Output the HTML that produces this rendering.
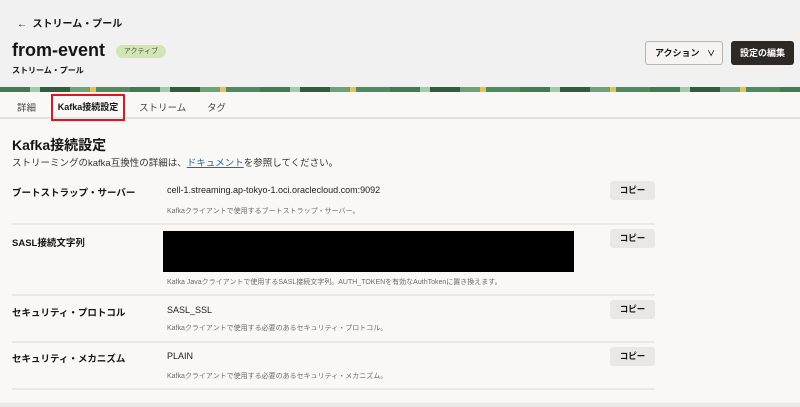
<!DOCTYPE html>
<html><head><meta charset="utf-8"><style>
*{margin:0;padding:0;box-sizing:border-box}
body{width:800px;height:407px;overflow:hidden;background:#faf8f7;font-family:"Liberation Sans","Noto Sans CJK JP",sans-serif;color:#161513;position:relative}
.a{position:absolute;white-space:nowrap}
.hdr{position:absolute;left:0;top:0;width:800px;height:88px;background:#f1f1f1}
.band{position:absolute;left:0;top:87px;width:800px;height:5px;background:repeating-linear-gradient(90deg,#3f7c50 0 30px,#9fcfa7 30px 40px,#2f5e3a 40px 70px,#6aa574 70px 90px,#e8c24a 90px 96px,#4e8c5d 96px 130px)}
.tabs{position:absolute;left:0;top:92px;width:800px;height:27px;border-bottom:2px solid #e4e1de}
.lbl{font-size:9.5px;font-weight:bold}
.val{font-size:9px;color:#222}
.help{font-size:7px;color:#6f6b67}
.copy{position:absolute;left:610px;width:45px;height:19px;background:#e9e8e6;border-radius:3px;font-size:8.5px;font-weight:bold;text-align:center;line-height:19px}
.div{position:absolute;left:12px;width:643px;height:2px;background:#ebe8e5}
</style></head><body>
<div class="hdr"></div>
<div class="band"></div>
<div class="a" style="left:17px;top:15px;font-size:10px;font-weight:bold">←&nbsp; ストリーム・プール</div>
<div class="a" style="left:12px;top:40px;font-size:18px;font-weight:bold">from-event</div>
<div class="a" style="left:116px;top:45px;width:50px;height:13px;border-radius:7px;background:#d3e5b4;font-size:7px;color:#4a5a34;text-align:center;line-height:13px">アクティブ</div>
<div class="a" style="left:12px;top:65px;font-size:8px;font-weight:bold">ストリーム・プール</div>
<div class="a" style="left:645px;top:41px;width:78px;height:24px;border:1px solid #b9b6b2;border-radius:3px;background:#f5f4f2;font-size:9px;font-weight:bold;line-height:22px;padding-left:9px">アクション&nbsp;&nbsp; <span style="font-size:8px">∨</span></div>
<div class="a" style="left:731px;top:41px;width:63px;height:24px;border-radius:3px;background:#2f2926;color:#fff;font-size:9px;font-weight:bold;line-height:24px;text-align:center">設定の編集</div>
<div class="tabs"></div>
<div class="a" style="left:17px;top:100px;font-size:9.5px;color:#444">詳細</div>
<div class="a" style="left:51px;top:94px;width:74px;height:27px;border:2.5px solid #e0161e;font-size:9px;font-weight:bold;text-align:center;line-height:22px">Kafka接続設定</div>
<div class="a" style="left:139px;top:100px;font-size:9.5px;color:#444">ストリーム</div>
<div class="a" style="left:207px;top:100px;font-size:9.5px;color:#444">タグ</div>
<div class="a" style="left:12px;top:135px;font-size:14px;font-weight:bold">Kafka接続設定</div>
<div class="a" style="left:12px;top:155px;font-size:9.5px;color:#333">ストリーミングのkafka互換性の詳細は、<span style="color:#1a6e9a;text-decoration:underline">ドキュメント</span>を参照してください。</div>

<div class="a lbl" style="left:12px;top:185px">ブートストラップ・サーバー</div>
<div class="a val" style="left:167px;top:185px">cell-1.streaming.ap-tokyo-1.oci.oraclecloud.com:9092</div>
<div class="a help" style="left:167px;top:206px">Kafkaクライアントで使用するブートストラップ・サーバー。</div>
<div class="copy" style="top:181px">コピー</div>
<div class="div" style="top:223px"></div>

<div class="a lbl" style="left:12px;top:235px">SASL接続文字列</div>
<div class="a" style="left:163px;top:231px;width:411px;height:41px;background:#000"></div>
<div class="a help" style="left:167px;top:277px">Kafka Javaクライアントで使用するSASL接続文字列。AUTH_TOKENを有効なAuthTokenに置き換えます。</div>
<div class="copy" style="top:229px">コピー</div>
<div class="div" style="top:294px"></div>

<div class="a lbl" style="left:12px;top:305px">セキュリティ・プロトコル</div>
<div class="a val" style="left:167px;top:305px">SASL_SSL</div>
<div class="a help" style="left:167px;top:323px">Kafkaクライアントで使用する必要のあるセキュリティ・プロトコル。</div>
<div class="copy" style="top:300px">コピー</div>
<div class="div" style="top:341px"></div>

<div class="a lbl" style="left:12px;top:351px">セキュリティ・メカニズム</div>
<div class="a val" style="left:167px;top:351px">PLAIN</div>
<div class="a help" style="left:167px;top:371px">Kafkaクライアントで使用する必要のあるセキュリティ・メカニズム。</div>
<div class="copy" style="top:347px">コピー</div>
<div class="div" style="top:388px"></div>
<div class="a" style="left:0;top:403px;width:800px;height:4px;background:#eceae8"></div>
</body></html>
